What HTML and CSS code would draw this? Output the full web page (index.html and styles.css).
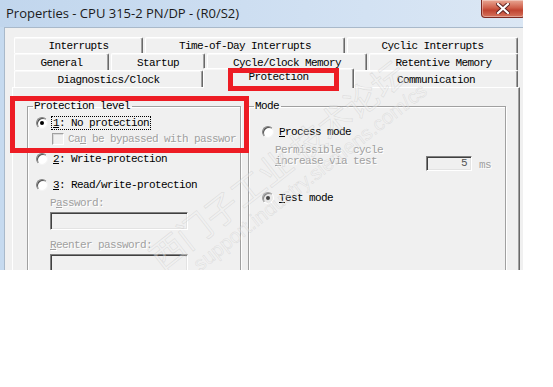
FILE: index.html
```html
<!DOCTYPE html>
<html lang="en">
<head>
  <meta charset="UTF-8" />
  <title>Properties - CPU 315-2 PN/DP - (R0/S2)</title>
  <link rel="stylesheet" href="styles.css">
</head>
<body>
  <div class="window">
    <div class="titlebar">
      <span class="title">Properties - CPU 315-2 PN/DP - (R0/S2)</span>
      <span class="close">
        <svg width="14" height="11" viewBox="0 0 14 11">
          <path d="M2 1 L12 10 M12 1 L2 10" stroke="#5a2020" stroke-width="4" stroke-linecap="square"/>
          <path d="M2 1 L12 10 M12 1 L2 10" stroke="#fff" stroke-width="2.2" stroke-linecap="square"/>
        </svg>
      </span>
    </div>

    <div class="dialog">
      <div class="tabs">
        <div class="tab-row row-back">
          <div class="tab w-interrupts">Interrupts</div>
          <div class="tab w-tod">Time-of-Day Interrupts</div>
          <div class="tab w-cyclic">Cyclic Interrupts</div>
        </div>
        <div class="tab-row row-mid">
          <div class="tab w-general">General</div>
          <div class="tab w-startup">Startup</div>
          <div class="tab w-cycle">Cycle/Clock Memory</div>
          <div class="tab w-retentive">Retentive Memory</div>
        </div>
        <div class="tab-row row-front">
          <div class="tab w-diag">Diagnostics/Clock</div>
          <div class="tab w-protection selected">Protection</div>
          <div class="tab w-comm">Communication</div>
        </div>
      </div>

      <div class="panel">
        <fieldset class="group group-level">
          <legend>Protection level</legend>
          <div class="opt opt-first">
            <span class="radio on"></span>
            <span class="label focus"><u>1</u>: No protection</span>
          </div>
          <div class="opt opt-check">
            <span class="check"></span>
            <span class="label disabled">Ca<u>n</u> be bypassed with passwor</span>
          </div>
          <div class="opt opt-second">
            <span class="radio"></span>
            <span class="label"><u>2</u>: Write-protection</span>
          </div>
          <div class="opt opt-third">
            <span class="radio"></span>
            <span class="label"><u>3</u>: Read/write-protection</span>
          </div>
          <div class="field-label disabled first-pw">P<u>a</u>ssword:</div>
          <div class="field"></div>
          <div class="field-label disabled second-pw"><u>R</u>eenter password:</div>
          <div class="field"></div>
        </fieldset>

        <fieldset class="group group-mode">
          <legend>Mode</legend>
          <div class="opt opt-process">
            <span class="radio"></span>
            <span class="label"><u>P</u>rocess mode</span>
          </div>
          <div class="cycle-row">
            <div class="cycle-text disabled">Permissible  cycle<br><u>i</u>ncrease via test</div>
            <div class="num-field">5</div>
            <div class="unit disabled">ms</div>
          </div>
          <div class="opt opt-test">
            <span class="radio on test"></span>
            <span class="label"><u>T</u>est mode</span>
          </div>
        </fieldset>
      </div>
    </div>

    <div class="watermark">
      <div class="wm-cn">西门子工业 技术论坛</div>
      <div class="wm-url">support.industry.siemens.com/cs</div>
    </div>

    <!-- red marks drawn over the screenshot -->
    <div class="mark mark-tab"></div>
    <div class="mark mark-level"></div>
  </div>
</body>
</html>
```

FILE: styles.css
```css
body {
  margin: 0;
  background: #fff;
  font-family: "Liberation Mono", "DejaVu Sans Mono", monospace;
  font-size: 11px;
  letter-spacing: -0.6px;
  color: #000;
}

.window {
  position: relative;
  width: 523px;
  height: 270px;
  overflow: hidden;
  background: #c6daef;
}

.titlebar {
  height: 27px;
  display: flex;
  align-items: flex-start;
  background: linear-gradient(to right, #c1d6ed, #d3e2f3 70%, #dbe7f4);
}

.title {
  font-family: "Open Sans", "Noto Sans", sans-serif;
  font-size: 13px;
  letter-spacing: 0;
  line-height: 16px;
  margin: 5px 0 0 6px;
  color: #1b1b1b;
}

.close {
  margin-left: auto;
  margin-right: -2px;
  width: 44px;
  height: 18px;
  box-sizing: border-box;
  border: 1px solid #7d2a22;
  border-top: none;
  border-radius: 0 0 4px 4px;
  background: linear-gradient(to bottom, #e9a794, #d0624d 45%, #c04431 60%, #d5735d);
  box-shadow: inset 0 0 0 1px rgba(255,255,255,0.35);
  display: flex;
  align-items: center;
  justify-content: center;
}

.dialog {
  margin-left: 4px;
  height: 243px;
  box-sizing: border-box;
  border-top: 1px solid #a9b9ca;
  border-left: 1px solid #a9b9ca;
  background: #f0f0f0;
  padding: 9px 0 0 7px;
}

.tabs {
  width: 508px;
}

.tab-row {
  display: flex;
  gap: 2px;
  padding-left: 2px;
}

.row-back { height: 16px; }
.row-mid { height: 17px; }
.row-front { height: 17px; gap: 0; }

.tab {
  box-sizing: border-box;
  height: 100%;
  border: 1px solid;
  border-color: #fff #696969 transparent #fff;
  border-bottom: none;
  border-radius: 2px 2px 0 0;
  box-shadow: inset -1px 0 #a0a0a0, inset 0 1px #f8f8f8;
  background: #f0f0f0;
  display: flex;
  align-items: center;
  justify-content: center;
  padding-top: 1px;
  white-space: nowrap;
}

.w-interrupts { width: 129px; }
.w-tod { width: 200px; }
.w-cyclic { width: 171px; }
.w-general { width: 95px; }
.w-startup { width: 94px; }
.w-cycle { width: 160px; }
.w-retentive { width: 149px; }
.w-diag { width: 189px; }
.w-protection { width: 151px; }
.w-comm { width: 164px; }

.tab.selected {
  position: relative;
  z-index: 1;
  margin-top: -2px;
  height: 20px;
  padding-top: 0;
  padding-bottom: 3px;
}

.panel {
  width: 508px;
  height: 190px;
  box-sizing: border-box;
  border-top: 1px solid #fff;
  border-left: 1px solid #fff;
  border-right: 1px solid #696969;
  box-shadow: inset -1px 0 #a0a0a0;
  padding: 12px 0 0 14px;
  display: flex;
  gap: 7px;
  align-items: flex-start;
}

.group {
  margin: 0;
  padding: 0;
  min-width: 0;
  height: 200px;
  box-sizing: border-box;
  border: 1px solid #a0a0a0;
  box-shadow: inset 1px 1px #fff, 1px 1px #fff;
}

.group legend {
  margin-left: 5px;
  padding: 0 2px 0 1px;
  line-height: 12px;
}

.group-level { width: 214px; }
.group-mode { width: 258px; }

.opt {
  display: flex;
  align-items: center;
  height: 14px;
  padding-left: 8px;
}

.opt .label {
  margin-left: 5px;
  line-height: 12px;
  white-space: nowrap;
}

.opt .label.focus {
  border: 1px dotted #000;
  padding: 0 1px;
  margin-left: 3px;
}

.opt-first { margin-top: 4px; }
.opt-check { margin-top: 2px; padding-left: 24px; }
.opt-check .label { margin-left: 4px; }
.opt-second { margin-top: 6px; }
.opt-third { margin-top: 12px; }

.radio {
  flex: none;
  position: relative;
  width: 12px;
  height: 12px;
  box-sizing: border-box;
  border-radius: 50%;
  border: 1px solid;
  border-color: #808080 #f4f4f4 #f4f4f4 #808080;
  box-shadow: inset 1px 1px #505050;
  background: #fff;
}

.radio.on::after {
  content: "";
  position: absolute;
  left: 3px;
  top: 3px;
  width: 4px;
  height: 4px;
  border-radius: 50%;
  background: #000;
}

.radio.test {
  background: #e9e9e9;
  border-color: #a0a0a0 #fff #fff #a0a0a0;
  box-shadow: inset 1px 1px #888;
}

.radio.test::after {
  background: #444;
}

.check {
  flex: none;
  width: 12px;
  height: 12px;
  box-sizing: border-box;
  border: 1px solid;
  border-color: #a0a0a0 #fff #fff #a0a0a0;
  box-shadow: inset 1px 1px #d8d8d8;
  background: #f0f0f0;
}

.disabled {
  color: #a0a0a0;
  text-shadow: 1px 1px #fff;
}

.field-label {
  margin-left: 22px;
  line-height: 12px;
}

.first-pw { margin-top: 5px; }
.second-pw { margin-top: 9px; }

.field {
  margin: 3px 0 0 22px;
  width: 138px;
  height: 18px;
  box-sizing: border-box;
  border: 1px solid;
  border-color: #808080 #fff #fff #808080;
  box-shadow: inset 1px 1px #404040, inset -1px -1px #e3e3e3;
  background: #f0f0f0;
}

.opt-process { margin-top: 13px; padding-left: 13px; }
.opt-test { margin-top: 20px; padding-left: 13px; }

.cycle-row {
  display: flex;
  align-items: flex-start;
  margin-top: 6px;
  padding-left: 26px;
}

.cycle-text {
  width: 151px;
  line-height: 11px;
  white-space: pre;
}

.num-field {
  margin-top: 11px;
  width: 46px;
  height: 15px;
  box-sizing: border-box;
  border: 1px solid;
  border-color: #808080 #fff #fff #808080;
  box-shadow: inset 1px 1px #404040, inset -1px -1px #e3e3e3;
  background: #f0f0f0;
  color: #555;
  text-align: right;
  line-height: 13px;
  padding-right: 4px;
}

.unit {
  margin: 14px 0 0 7px;
  line-height: 12px;
}

.watermark {
  position: absolute;
  left: 142px;
  top: 246px;
  transform: rotate(-38deg);
  transform-origin: 0 0;
  pointer-events: none;
  letter-spacing: 0;
}

.wm-cn {
  font-family: "Noto Sans CJK SC", sans-serif;
  font-size: 34px;
  line-height: 38px;
  color: rgba(240, 240, 240, 0.4);
  -webkit-text-stroke: 0.7px rgba(150, 150, 150, 0.2);
  white-space: nowrap;
}

.wm-url {
  font-family: "Liberation Sans", sans-serif;
  font-size: 20px;
  line-height: 22px;
  margin-left: 30px;
  color: rgba(240, 240, 240, 0.4);
  -webkit-text-stroke: 0.6px rgba(150, 150, 150, 0.2);
  white-space: nowrap;
}

.mark {
  position: absolute;
  box-sizing: border-box;
  border: 5px solid #ed1c24;
  pointer-events: none;
  z-index: 2;
}

.mark-tab {
  left: 228px;
  top: 68px;
  width: 111px;
  height: 23px;
}

.mark-level {
  left: 10px;
  top: 96px;
  width: 239px;
  height: 57px;
}
```
